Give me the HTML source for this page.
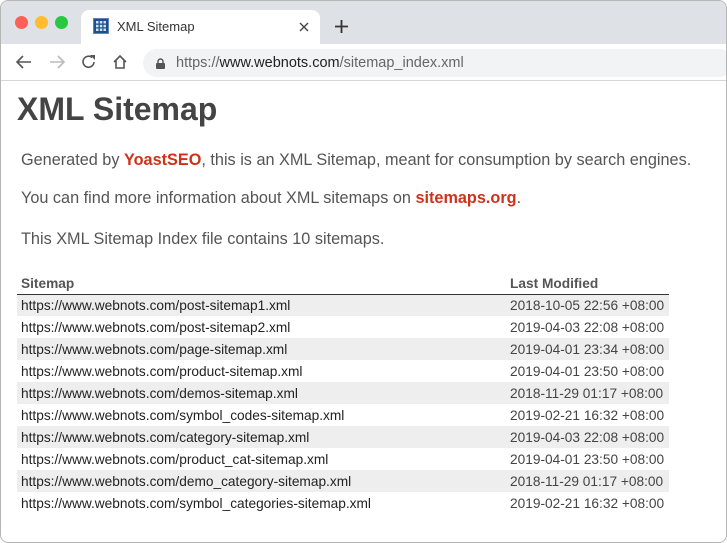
<!DOCTYPE html>
<html><head><style>
*{margin:0;padding:0;box-sizing:border-box}
body{width:727px;height:543px;background:#fff;font-family:"Liberation Sans",sans-serif;overflow:hidden;position:relative}
.win{position:absolute;left:0;top:0;width:727px;height:543px;border:1px solid #b5b5b5;border-radius:8px;overflow:hidden}
.tabs{position:absolute;left:0;top:0;width:100%;height:43px;background:#dee1e6}
.dot{position:absolute;top:15px;width:13px;height:13px;border-radius:50%}
.tab{position:absolute;left:80px;top:9px;width:239px;height:34px;background:#fff;border-radius:8px 8px 0 0}
.bar{position:absolute;left:0;top:43px;width:100%;height:37px;background:#fff;border-bottom:1px solid #d6d6d6}
.url{position:absolute;left:142px;top:5px;width:590px;height:28px;background:#f1f3f4;border-radius:14px;font-size:14.5px;color:#666;padding:6px 0 0 33px}
.c{position:absolute;left:0;top:81px;width:100%}
h1{position:absolute;left:16px;top:9px;font-size:32px;color:#444;font-weight:bold}
p{position:absolute;left:20px;font-size:16.25px;color:#555}
p b{color:#d0311a}
table{position:absolute;left:16px;top:191px;width:652px;border-collapse:collapse;font-size:13.7px}
th{text-align:left;color:#555;font-size:13.7px;height:21px;border-bottom:1px solid #333;padding-left:4px;vertical-align:bottom;padding-bottom:3px}
td{height:22px;padding-left:4px;color:#222}
td+td{color:#444}
tr:nth-child(even) td{background:#eee}
</style></head><body><div class="win">
<div class="tabs">
<div class="dot" style="left:14px;background:#fe5f57"></div>
<div class="dot" style="left:34px;background:#febc2e"></div>
<div class="dot" style="left:54px;background:#28c840"></div>
<div class="tab">
<svg style="position:absolute;left:12px;top:8px" width="16" height="16"><rect x="0.5" y="0.5" width="15" height="15" fill="#1d4f8c" stroke="#5c86b8"/><g fill="#cfe0f3"><rect x="3" y="3" width="2.5" height="2.5"/><rect x="6.8" y="3" width="2.5" height="2.5"/><rect x="10.5" y="3" width="2.5" height="2.5"/><rect x="3" y="6.8" width="2.5" height="2.5"/><rect x="6.8" y="6.8" width="2.5" height="2.5"/><rect x="10.5" y="6.8" width="2.5" height="2.5"/><rect x="3" y="10.5" width="2.5" height="2.5"/><rect x="6.8" y="10.5" width="2.5" height="2.5"/><rect x="10.5" y="10.5" width="2.5" height="2.5"/></g></svg>
<span style="position:absolute;left:36px;top:9px;font-size:13px;color:#333">XML Sitemap</span>
<svg style="position:absolute;left:218px;top:12px" width="10" height="10"><path d="M1 1L9 9M9 1L1 9" stroke="#444" stroke-width="1.4"/></svg>
</div>
<svg style="position:absolute;left:334px;top:19px" width="13" height="13"><path d="M6.5 0V13M0 6.5H13" stroke="#333" stroke-width="1.8"/></svg>
</div>
<div class="bar">
<svg style="position:absolute;left:15px;top:11px" width="16" height="14"><path d="M15 7H2M7 1L1 7L7 13" stroke="#555" stroke-width="1.6" fill="none"/></svg>
<svg style="position:absolute;left:48px;top:11px" width="16" height="14"><path d="M1 7H14M9 1L15 7L9 13" stroke="#bbb" stroke-width="1.6" fill="none"/></svg>
<svg style="position:absolute;left:80px;top:10px" width="16" height="16"><path d="M13 8A5.5 5.5 0 1 1 11 3.5" stroke="#555" stroke-width="1.6" fill="none"/><path d="M9 1H14V6Z" fill="#555"/></svg>
<svg style="position:absolute;left:111px;top:10px" width="16" height="16"><path d="M2 8L8 2L14 8M4 6.5V14H12V6.5" stroke="#555" stroke-width="1.6" fill="none"/></svg>
<div class="url"><svg style="position:absolute;left:13px;top:9px" width="9" height="11"><path d="M2 5V3.5A2.5 2.5 0 0 1 7 3.5V5" stroke="#555" stroke-width="1.4" fill="none"/><rect x="0" y="5" width="9" height="6" rx="1" fill="#555"/></svg>https://<span style="color:#222">www.webnots.com</span>/sitemap_index.xml</div>
</div>
<div class="c">
<h1>XML Sitemap</h1>
<p style="top:69px">Generated by <b>YoastSEO</b>, this is an XML Sitemap, meant for consumption by search engines.</p>
<p style="top:107px">You can find more information about XML sitemaps on <b>sitemaps.org</b>.</p>
<p style="top:148px">This XML Sitemap Index file contains 10 sitemaps.</p>
<table>
<tr><th>Sitemap</th><th style="width:163px">Last Modified</th></tr>
<tr><td>https://www.webnots.com/post-sitemap1.xml</td><td>2018-10-05 22:56 +08:00</td></tr>
<tr><td>https://www.webnots.com/post-sitemap2.xml</td><td>2019-04-03 22:08 +08:00</td></tr>
<tr><td>https://www.webnots.com/page-sitemap.xml</td><td>2019-04-01 23:34 +08:00</td></tr>
<tr><td>https://www.webnots.com/product-sitemap.xml</td><td>2019-04-01 23:50 +08:00</td></tr>
<tr><td>https://www.webnots.com/demos-sitemap.xml</td><td>2018-11-29 01:17 +08:00</td></tr>
<tr><td>https://www.webnots.com/symbol_codes-sitemap.xml</td><td>2019-02-21 16:32 +08:00</td></tr>
<tr><td>https://www.webnots.com/category-sitemap.xml</td><td>2019-04-03 22:08 +08:00</td></tr>
<tr><td>https://www.webnots.com/product_cat-sitemap.xml</td><td>2019-04-01 23:50 +08:00</td></tr>
<tr><td>https://www.webnots.com/demo_category-sitemap.xml</td><td>2018-11-29 01:17 +08:00</td></tr>
<tr><td>https://www.webnots.com/symbol_categories-sitemap.xml</td><td>2019-02-21 16:32 +08:00</td></tr>
</table>
</div>
</div></body></html>
